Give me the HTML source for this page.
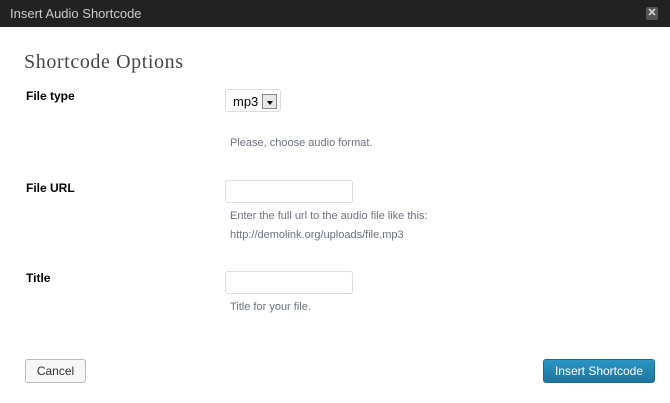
<!DOCTYPE html>
<html><head><style>
*{margin:0;padding:0;box-sizing:border-box}
body{width:670px;height:403px;background:#fff;font-family:"Liberation Sans",Arial,sans-serif;position:relative;overflow:hidden}
.bar{position:absolute;left:0;top:0;width:670px;height:27px;background:#222}
.bar span{position:absolute;left:10px;top:6px;color:#ccc;font-size:13px}
.x{position:absolute;left:646px;top:7px;width:12px;height:13px;background:#555;border-radius:2px;color:#ddd;font-size:11px;line-height:13px;text-align:center;font-weight:bold}
.h{position:absolute;left:24px;top:51px;font-family:Georgia,"Liberation Serif",serif;font-size:20px;letter-spacing:0.6px;color:#464646}
.l{position:absolute;left:26px;font-size:12px;font-weight:bold;color:#000}
.d{position:absolute;left:230px;font-size:11px;color:#6b7280;line-height:19px}
.in{position:absolute;left:225px;width:128px;height:23px;border:1px solid #ddd;border-radius:3px}
.sel{position:absolute;left:225px;top:89px;width:56px;height:23px;border:1px solid #ddd;border-radius:3px;font-size:13px;padding:4px 0 0 7px}
.sel i{position:absolute;right:3px;top:4px;width:15px;height:15px;border:1px solid #888;background:#e8e8e8}
.sel i:after{content:"";position:absolute;left:4px;top:6px;border:3px solid transparent;border-top:4px solid #000}
.b1{position:absolute;left:25px;top:359px;width:61px;height:24px;border:1px solid #bbb;border-radius:3px;font-size:12px;text-align:center;line-height:22px;background:#f7f7f7;color:#333}
.b2{position:absolute;left:543px;top:359px;width:112px;height:24px;border:1px solid #1e6a8d;border-radius:3px;font-size:12px;text-align:center;line-height:22px;background:linear-gradient(#2a95c5,#21759b);color:#fff}
</style></head><body>
<div class="bar"><span>Insert Audio Shortcode</span><div class="x">✕</div></div>
<div class="h">Shortcode Options</div>
<div class="l" style="top:89px">File type</div>
<div class="sel">mp3<i></i></div>
<div class="d" style="top:134px">Please, choose audio format.</div>
<div class="l" style="top:181px">File URL</div>
<div class="in" style="top:180px"></div>
<div class="d" style="top:207px">Enter the full url to the audio file like this:<br>http://demolink.org/uploads/file.mp3</div>
<div class="l" style="top:271px">Title</div>
<div class="in" style="top:271px"></div>
<div class="d" style="top:298px">Title for your file.</div>
<div class="b1">Cancel</div>
<div class="b2">Insert Shortcode</div>
</body></html>
